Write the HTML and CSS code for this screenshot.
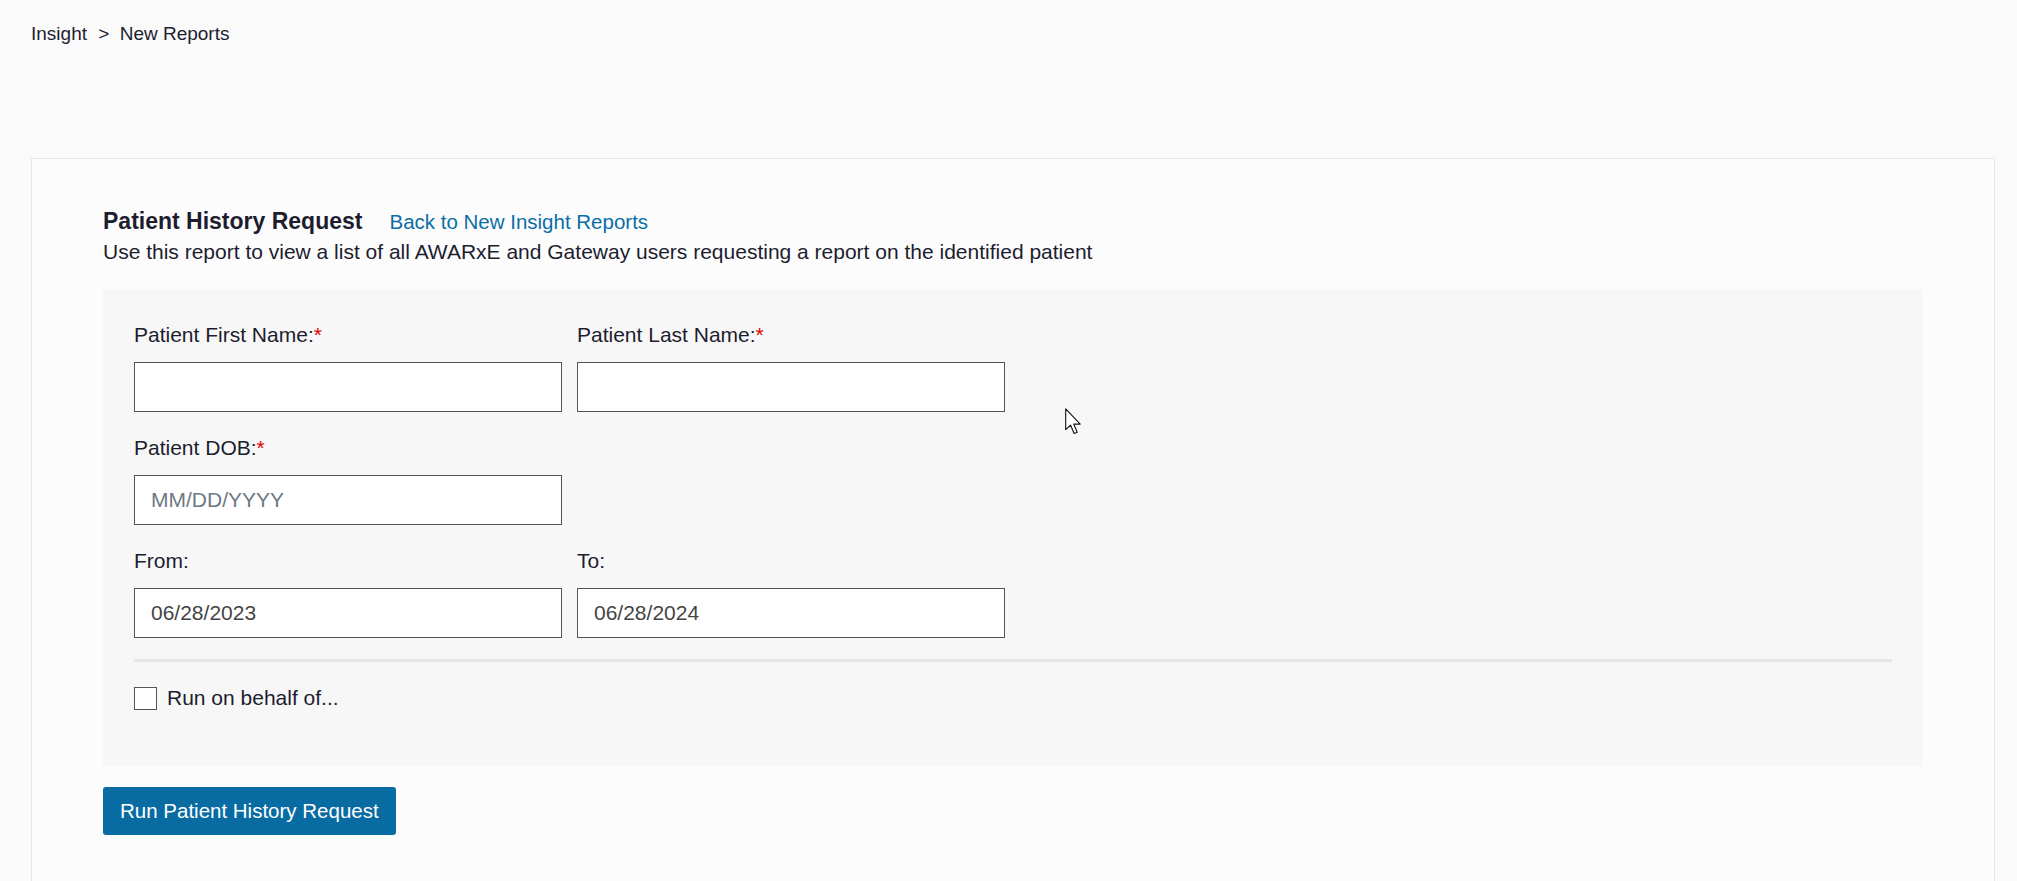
FILE: index.html
```html
<!DOCTYPE html>
<html lang="en">
<head>
  <meta charset="UTF-8" />
  <title>Patient History Request</title>
  <link rel="stylesheet" href="styles.css">
</head>
<body>
  <div class="breadcrumb">
    <span>Insight</span>
    <span class="sep">&gt;</span>
    <span>New Reports</span>
  </div>

  <div class="card">
    <div class="report-head">
      <h2>Patient History Request</h2>
      <a href="#">Back to New Insight Reports</a>
    </div>
    <p class="report-desc">Use this report to view a list of all AWARxE and Gateway users requesting a report on the identified patient</p>

    <form class="panel">
      <div class="field-row">
        <div class="field">
          <label>Patient First Name:<span class="req">*</span></label>
          <input type="text">
        </div>
        <div class="field">
          <label>Patient Last Name:<span class="req">*</span></label>
          <input type="text">
        </div>
      </div>
      <div class="field-row">
        <div class="field">
          <label>Patient DOB:<span class="req">*</span></label>
          <input type="text" placeholder="MM/DD/YYYY">
        </div>
      </div>
      <div class="field-row last">
        <div class="field">
          <label>From:</label>
          <input type="text" value="06/28/2023">
        </div>
        <div class="field">
          <label>To:</label>
          <input type="text" value="06/28/2024">
        </div>
      </div>
      <hr class="divider">
      <label class="check">
        <span class="box"></span>
        Run on behalf of...
      </label>
    </form>

    <button class="run-btn">Run Patient History Request</button>
  </div>

  <!-- mouse pointer captured in the screenshot -->
  <svg class="pointer" width="18" height="28" viewBox="0 0 13 20">
    <path d="M0.5 0.5 L0.5 15.5 L4 12.2 L6.6 18.3 L8.8 17.4 L6.3 11.5 L11 11.5 Z" fill="#fff" stroke="#111" stroke-width="0.8" stroke-linejoin="round"/>
  </svg>
</body>
</html>
```

FILE: styles.css
```css
html, body {
  margin: 0;
  padding: 0;
  background: #fafafa;
  font-family: 'Liberation Sans', Arial, sans-serif;
  color: #1d1d2f;
}

body {
  position: relative;
}

.breadcrumb {
  padding: 23px 31px 0;
  font-size: 19px;
  line-height: 22px;
  height: 112px;
}

.breadcrumb .sep {
  margin: 0 5px 0 6px;
}

.card {
  margin: 23px 22px 0 31px;
  background: #fcfcfc;
  border: 1px solid #e8e8e8;
  border-bottom: none;
  padding: 48px 71px 60px;
}

.report-head {
  display: flex;
  align-items: baseline;
  gap: 27px;
  line-height: 28px;
}

.report-head h2 {
  margin: 0;
  font-size: 23px;
  font-weight: bold;
}

.report-head a {
  color: #0b6ea7;
  font-size: 20.5px;
  text-decoration: none;
}

.report-desc {
  margin: 4px 0 0;
  font-size: 21px;
  line-height: 24px;
}

.panel {
  margin-top: 25px;
  background: #f7f7f7;
  padding: 34px 31px 56px;
}

.field-row {
  display: flex;
  gap: 15px;
  margin-bottom: 24px;
}

.field-row.last {
  margin-bottom: 21px;
}

.field {
  display: flex;
  flex-direction: column;
  width: 428px;
}

.field label {
  font-size: 21px;
  line-height: 24px;
  margin-bottom: 15px;
}

.req {
  color: #e00000;
}

.field input {
  box-sizing: border-box;
  height: 50px;
  border: 1px solid #555;
  background: #fff;
  padding: 0 16px;
  font-family: inherit;
  font-size: 21px;
  color: #444;
}

.field input::placeholder {
  color: #6e7882;
}

.divider {
  border: none;
  height: 3px;
  background: #e6e6e6;
  margin: 0 0 24px;
}

.check {
  display: flex;
  align-items: center;
  gap: 10px;
  font-size: 21px;
  line-height: 24px;
}

.check .box {
  width: 21px;
  height: 21px;
  border: 1px solid #555;
  background: #fff;
}

.run-btn {
  margin-top: 21px;
  background: #086ca3;
  color: #fff;
  border: none;
  border-radius: 3px;
  padding: 0 17px;
  height: 48px;
  font-family: inherit;
  font-size: 20.5px;
}

.pointer {
  position: absolute;
  left: 1065px;
  top: 408px;
}
```
